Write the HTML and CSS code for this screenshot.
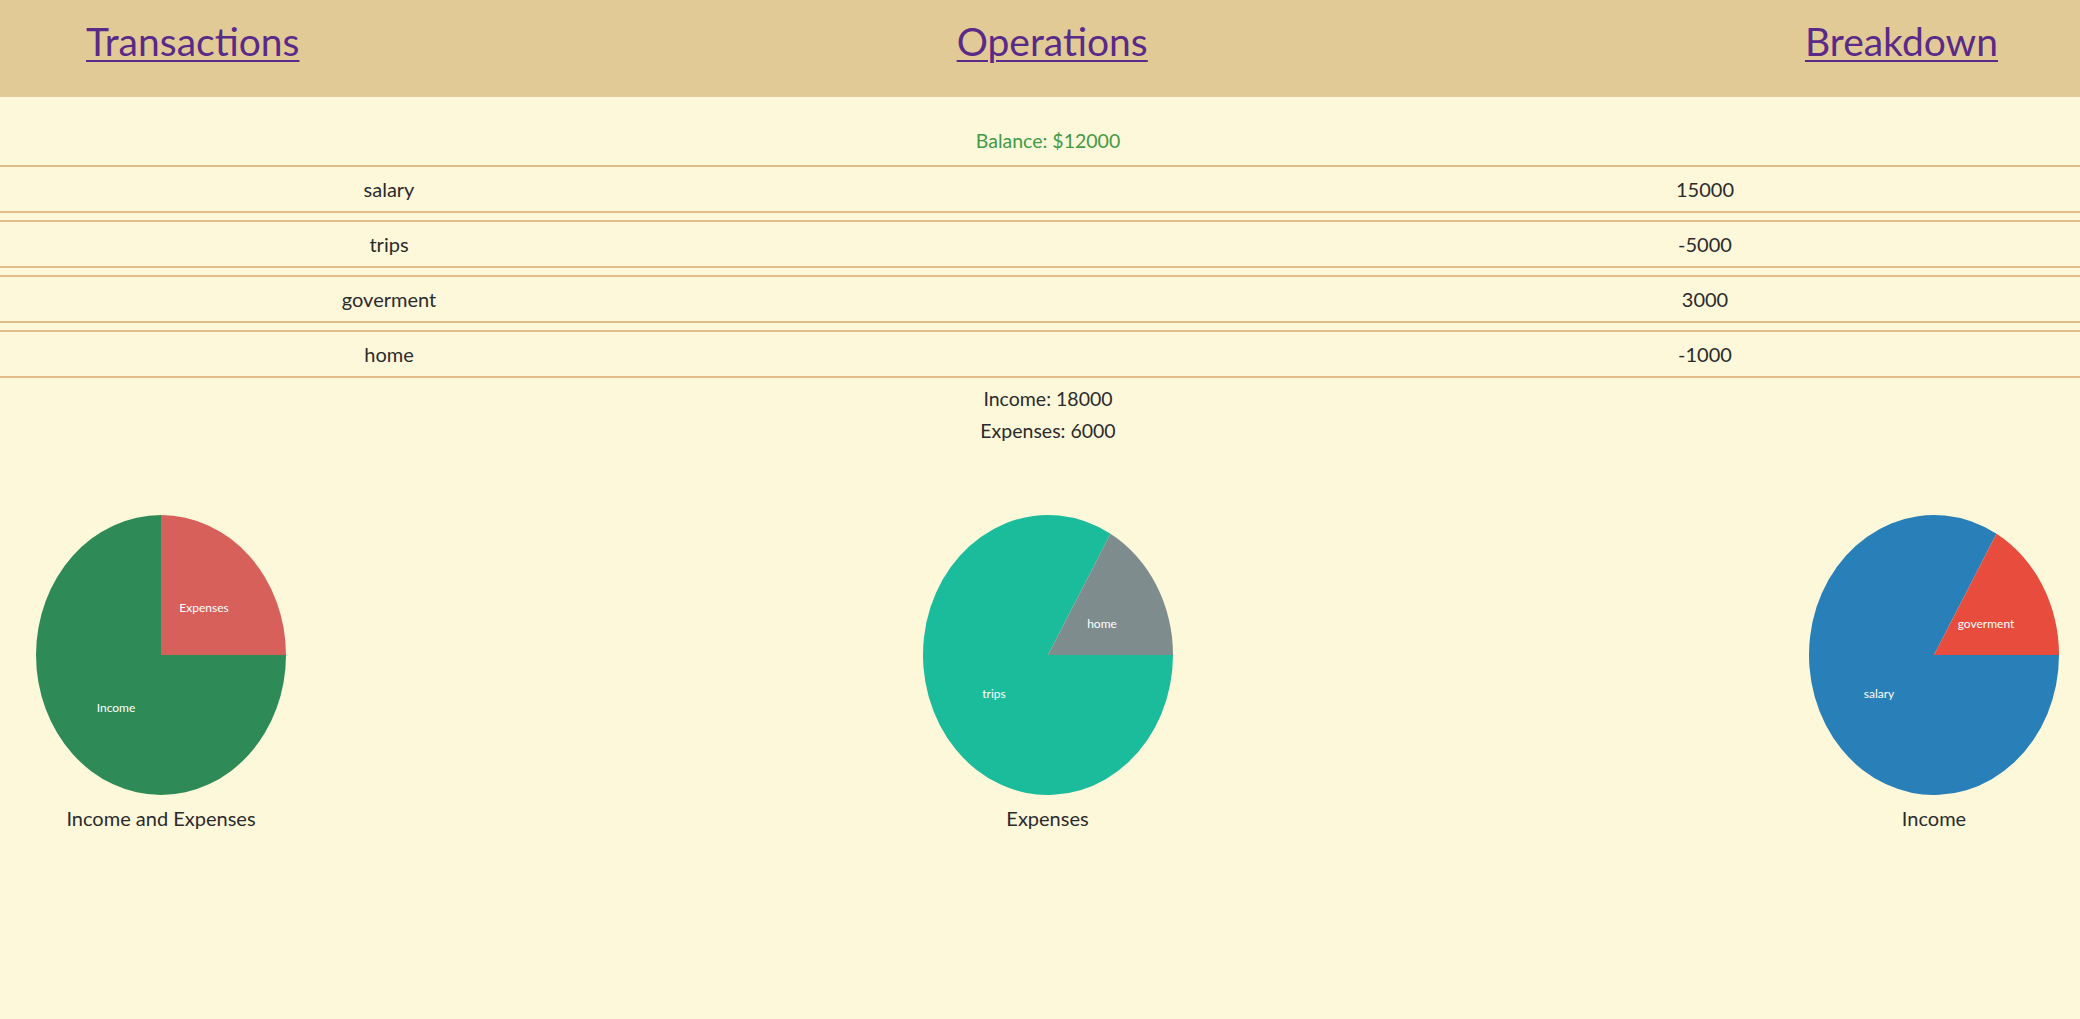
FILE: index.html
```html
<!DOCTYPE html>
<html lang="en">
<head>
<meta charset="utf-8">
<title>Budget</title>
<link rel="stylesheet" href="styles.css">
</head>
<body>
<header class="nav">
  <a class="nav-link" href="#transactions">Transactions</a>
  <a class="nav-link" href="#operations">Operations</a>
  <a class="nav-link" href="#breakdown">Breakdown</a>
</header>
<main>
  <div class="balance">Balance: $12000</div>
  <div class="rows">
    <div class="row"><span class="cell-name">salary</span><span></span><span class="cell-amount">15000</span></div>
    <div class="row"><span class="cell-name">trips</span><span></span><span class="cell-amount">-5000</span></div>
    <div class="row"><span class="cell-name">goverment</span><span></span><span class="cell-amount">3000</span></div>
    <div class="row"><span class="cell-name">home</span><span></span><span class="cell-amount">-1000</span></div>
  </div>
  <div class="totals">
    <div>Income: 18000</div>
    <div>Expenses: 6000</div>
  </div>
  <div class="charts">
    <figure class="chart">
      <svg class="pie" viewBox="0 0 250 280" width="250" height="280">
        <path class="s-income" d="M125,140 L250,140 A125,140 0 1 1 125,0 Z"/>
        <path class="s-expense" d="M125,140 L125,0 A125,140 0 0 1 250,140 Z"/>
        <text class="pie-label" x="168" y="92">Expenses</text>
        <text class="pie-label" x="80" y="192">Income</text>
      </svg>
      <figcaption class="caption">Income and Expenses</figcaption>
    </figure>
    <figure class="chart">
      <svg class="pie" viewBox="0 0 250 280" width="250" height="280">
        <path class="s-trips" d="M125,140 L187.5,18.76 A125,140 0 1 0 250,140 Z"/>
        <path class="s-home" d="M125,140 L250,140 A125,140 0 0 0 187.5,18.76 Z"/>
        <text class="pie-label" x="179" y="108">home</text>
        <text class="pie-label" x="71" y="178">trips</text>
      </svg>
      <figcaption class="caption">Expenses</figcaption>
    </figure>
    <figure class="chart">
      <svg class="pie" viewBox="0 0 250 280" width="250" height="280">
        <path class="s-salary" d="M125,140 L187.5,18.76 A125,140 0 1 0 250,140 Z"/>
        <path class="s-gov" d="M125,140 L250,140 A125,140 0 0 0 187.5,18.76 Z"/>
        <text class="pie-label" x="177" y="108">goverment</text>
        <text class="pie-label" x="70" y="178">salary</text>
      </svg>
      <figcaption class="caption">Income</figcaption>
    </figure>
  </div>
</main>
</body>
</html>
```
FILE: styles.css
```css
html, body {
  margin: 0;
  padding: 0;
}
body {
  background: #fef8db;
  font-family: Lato, "Noto Sans", sans-serif;
  color: #2b2b2b;
  min-height: 1019px;
}
.nav {
  height: 97px;
  background: #e2ca96;
  display: flex;
  justify-content: space-between;
  align-items: flex-start;
  padding: 16px 82px 0 86px;
  box-sizing: border-box;
}
.nav-link {
  font-size: 39px;
  line-height: 50px;
  color: #5a2a88;
  text-decoration: underline;
  text-decoration-thickness: 2px;
  text-underline-offset: 4px;
}
.balance {
  margin-top: 29px;
  margin-bottom: 9px;
  padding-left: 16px;
  line-height: 30px;
  font-size: 19.5px;
  text-align: center;
  color: #439a43;
}
.rows {
  display: flex;
  flex-direction: column;
  gap: 7px;
}
.row {
  display: grid;
  grid-template-columns: 778px 600px 654px;
  align-items: center;
  height: 44px;
  border-top: 2px solid #e2bb8a;
  border-bottom: 2px solid #e2bb8a;
  font-size: 20px;
}
.cell-name, .cell-amount {
  text-align: center;
}
.totals {
  margin-top: 5px;
  padding-left: 16px;
  text-align: center;
  font-size: 19.5px;
  line-height: 32px;
}
.charts {
  display: flex;
  justify-content: space-between;
  padding: 0 21px 0 36px;
  margin-top: 68px;
}
.chart {
  margin: 0;
  width: 250px;
  display: flex;
  flex-direction: column;
  align-items: center;
}
.pie {
  display: block;
}
.caption {
  margin-top: 7px;
  font-size: 20px;
  line-height: 32px;
  white-space: nowrap;
}
.s-income { fill: #2e8b57; }
.s-expense { fill: #d8605b; }
.s-trips { fill: #1abc9c; }
.s-home { fill: #7f8c8d; }
.s-salary { fill: #2980b9; }
.s-gov { fill: #e74c3c; }
.pie-label {
  fill: #ffffff;
  font-family: Lato, "Noto Sans", sans-serif;
  font-size: 12px;
  text-anchor: middle;
  dominant-baseline: central;
}
```
